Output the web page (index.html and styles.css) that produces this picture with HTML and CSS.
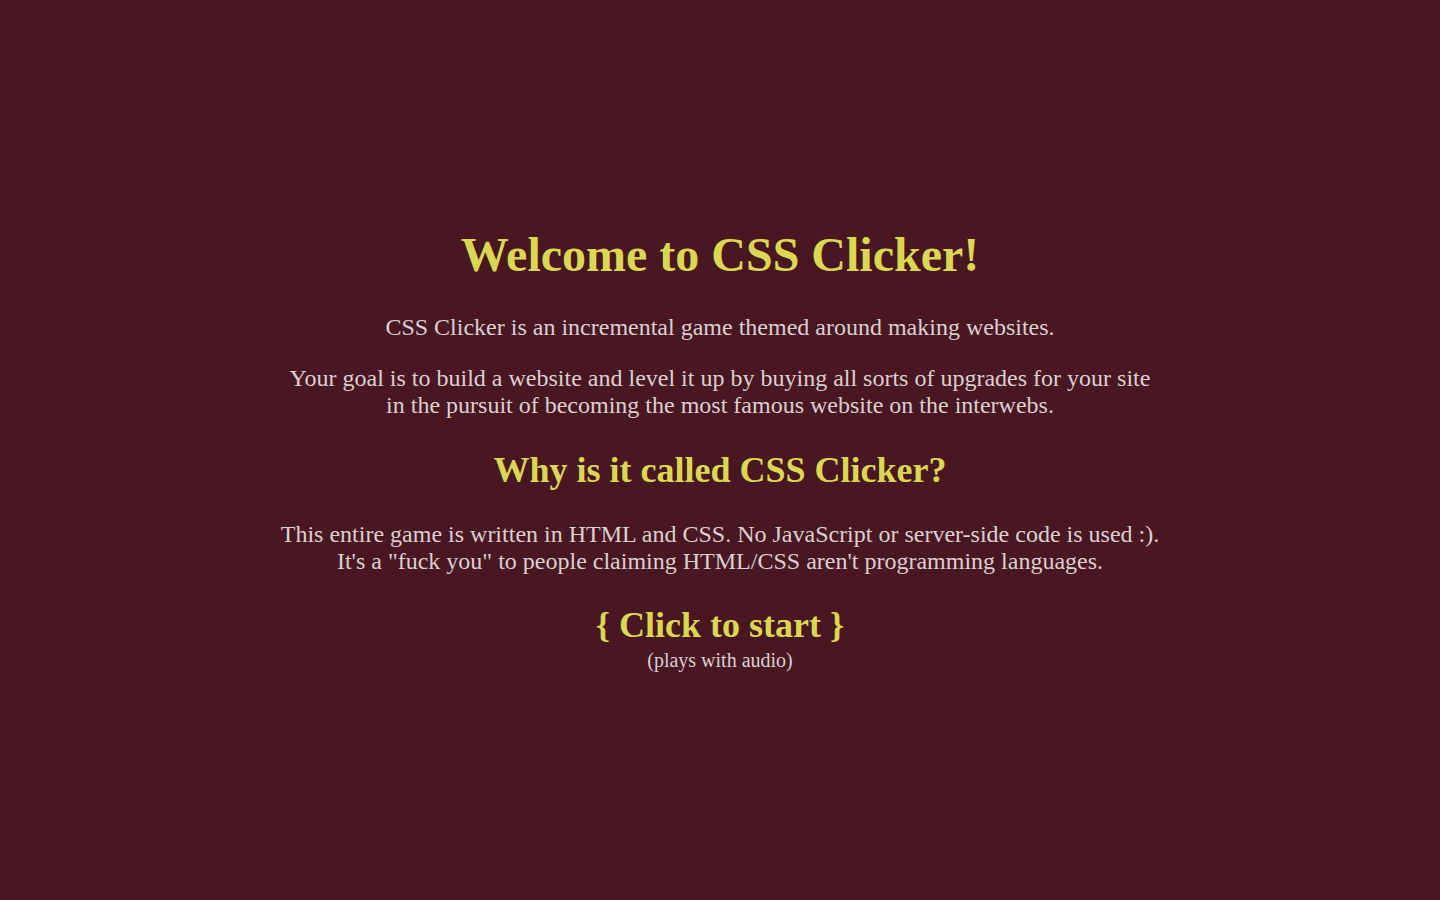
FILE: index.html
```html
<!DOCTYPE html>
<html lang="en">
<head>
<meta charset="utf-8">
<title>CSS Clicker</title>
<link rel="stylesheet" href="styles.css">
</head>
<body>
<main class="intro">
  <h1 class="intro-title">Welcome to CSS Clicker!</h1>
  <p class="intro-text">CSS Clicker is an incremental game themed around making websites.</p>
  <p class="intro-text">Your goal is to build a website and level it up by buying all sorts of upgrades for your site<br>in the pursuit of becoming the most famous website on the interwebs.</p>
  <h2 class="intro-heading">Why is it called CSS Clicker?</h2>
  <p class="intro-text">This entire game is written in HTML and CSS. No JavaScript or server-side code is used :).<br>It's a "fuck you" to people claiming HTML/CSS aren't programming languages.</p>
  <label class="start">
    <span class="start-label">{ Click to start }</span>
    <span class="start-note">(plays with audio)</span>
  </label>
</main>
</body>
</html>
```
FILE: styles.css
```css
html, body {
  margin: 0;
  padding: 0;
}

body {
  background: #491722;
  color: #dccfd1;
  font-family: "Liberation Serif", "Times New Roman", serif;
}

.intro {
  box-sizing: border-box;
  min-height: 100vh;
  padding-bottom: 2px;
  display: flex;
  flex-direction: column;
  align-items: center;
  justify-content: center;
  text-align: center;
}

.intro-title {
  color: #dcd752;
  font-size: 48px;
  font-weight: bold;
  margin: 0 0 32px;
}

.intro-heading {
  color: #dcd752;
  font-size: 36px;
  font-weight: bold;
  margin: 6px 0 30px;
}

.intro-text {
  font-size: 24px;
  line-height: 27px;
  margin: 0 0 24px;
}

.start {
  display: flex;
  flex-direction: column;
  align-items: center;
  cursor: pointer;
  margin-top: 5px;
}

.start-label {
  color: #dcd752;
  font-size: 36px;
  font-weight: bold;
}

.start-note {
  font-size: 20px;
  margin-top: 3px;
}
```
